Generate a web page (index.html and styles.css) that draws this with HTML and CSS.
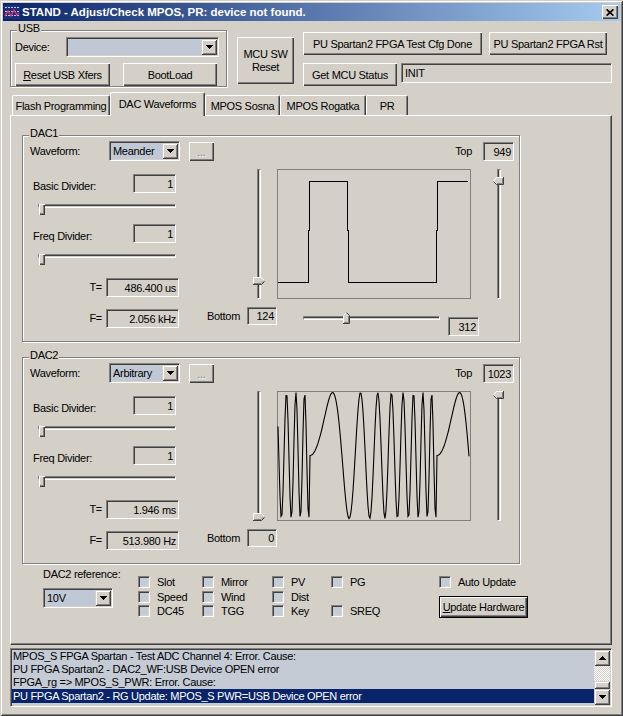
FILE: index.html
```html
<!DOCTYPE html>
<html lang="en">
<head>
<meta charset="utf-8">
<title>STAND</title>
<link rel="stylesheet" href="styles.css">
</head>
<body>
<div class="window">
  <div class="titlebar">
    <svg class="app-icon" width="16" height="16" viewBox="0 0 16 16">
      <rect x="0" y="1" width="16" height="14" fill="#1C2F78"/>
      <path d="M1 3.5H15M1 7.5H15M1 11.5H15" stroke="#B8C4E8" stroke-dasharray="2 1"/>
      <polyline points="1,12 4,7 7,12 10,6 13,11 15,9" fill="none" stroke="#E8386C" stroke-width="1.2"/>
    </svg>
    <span class="title">STAND - Adjust/Check MPOS, PR: device not found.</span>
    <span class="close-btn"><svg width="8" height="7" viewBox="0 0 8 7"><path d="M0.6 0.4L7.4 6.6M7.4 0.4L0.6 6.6" stroke="#000" stroke-width="1.7"/></svg></span>
  </div>
  <div class="client">
    <div class="top-row">
      <div class="group usb">
        <span class="group-title">USB</span>
        <div class="usb-line">
          <span class="usb-label">Device:</span>
          <div class="combo combo-device"><span class="combo-text"></span><span class="drop-btn"><svg width="7" height="4" viewBox="0 0 7 4"><path d="M0,0H7V1H6V2H5V3H4V4H3V3H2V2H1V1H0Z" fill="#000"/></svg></span></div>
        </div>
        <div class="usb-buttons">
          <button class="btn btn-reset"><u>R</u>eset USB Xfers</button>
          <button class="btn btn-boot">BootLoad</button>
        </div>
      </div>
      <button class="btn btn-mcu">MCU SW<br>Reset</button>
      <div class="fpga">
        <div class="fpga-line">
          <button class="btn btn-cfg">PU Spartan2 FPGA Test Cfg Done</button>
          <button class="btn btn-rst">PU Spartan2 FPGA Rst</button>
        </div>
        <div class="fpga-line fpga-line2">
          <button class="btn btn-status">Get MCU Status</button>
          <div class="field status-field">INIT</div>
        </div>
      </div>
    </div>

    <div class="tabs">
      <span class="tab tab-flash">Flash Programming</span>
      <span class="tab tab-dac active">DAC Waveforms</span>
      <span class="tab tab-sosna">MPOS Sosna</span>
      <span class="tab tab-rogatka">MPOS Rogatka</span>
      <span class="tab tab-pr">PR</span>
    </div>

    <div class="panel">
      <!-- DAC1 -->
      <div class="group dac">
        <span class="group-title">DAC1</span>
        <div class="dac-head">
          <span class="wave-label">Waveform:</span>
          <div class="combo combo-wave"><span class="combo-text">Meander</span><span class="drop-btn"><svg width="7" height="4" viewBox="0 0 7 4"><path d="M0,0H7V1H6V2H5V3H4V4H3V3H2V2H1V1H0Z" fill="#000"/></svg></span></div>
          <button class="btn btn-more">...</button>
          <span class="top-label">Top</span>
          <div class="field num top-field">949</div>
        </div>
        <div class="dac-body">
          <div class="params">
            <div class="param-row first"><span class="param-label">Basic Divider:</span><div class="field num div-field">1</div></div>
            <div class="hslider div-slider"><span class="groove"></span><span class="thumb-rect" style="left:1px"></span></div>
            <div class="param-row"><span class="param-label">Freq Divider:</span><div class="field num div-field">1</div></div>
            <div class="hslider div-slider"><span class="groove"></span><span class="thumb-rect" style="left:1px"></span></div>
            <div class="result-row result-t"><span class="result-label">T=</span><div class="field num result-field">486.400 us</div></div>
            <div class="result-row result-f"><span class="result-label">F=</span><div class="field num result-field">2.056 kHz</div></div>
          </div>
          <div class="level-col">
            <div class="vslider vslider-left"><span class="vgroove"></span>
              <svg class="thumb-v" style="top:108px" width="12" height="8" viewBox="0 0 12 8">
                <polygon points="0,0 8,0 12,4 8,8 0,8" fill="#D4D0C8"/>
                <polyline points="0.5,8 0.5,0.5 8.5,0.5 11,3" fill="none" stroke="#fff"/>
                <polyline points="0,7.5 8.5,7.5 11.5,4.5" fill="none" stroke="#404040"/>
                <polyline points="1,6.5 8,6.5 10.5,4" fill="none" stroke="#808080"/>
              </svg>
            </div>
            <div class="bottom-row"><span class="bottom-label">Bottom</span><div class="field num bottom-field">124</div></div>
          </div>
          <div class="graph-col">
            <svg class="graph" width="194" height="130" viewBox="0 0 194 130">
              <rect x="0.5" y="0.5" width="193" height="129" fill="none" stroke="#808080"/>
              <polyline points="1,113.5 31.5,113.5 31.5,61.5 32.5,61.5 32.5,12.5 70.5,12.5 70.5,61.5 71.5,61.5 71.5,113.5 159.5,113.5 159.5,61.5 160.5,61.5 160.5,12.5 191,12.5" fill="none" stroke="#000" shape-rendering="crispEdges"/>
            </svg>
            <div class="graph-under">
              <div class="hslider time-slider"><span class="groove"></span>
                <svg class="thumb-h" style="left:40px" width="7" height="12" viewBox="0 0 7 12">
                  <polygon points="0,3.5 3.5,0 7,3.5 7,12 0,12" fill="#D4D0C8"/>
                  <polyline points="0.5,11.5 0.5,3.5 3.5,0.5" fill="none" stroke="#fff"/>
                  <polyline points="3.5,0.5 6.5,3.5 6.5,11.5 0,11.5" fill="none" stroke="#404040"/>
                  <polyline points="5.5,4 5.5,10.5 1,10.5" fill="none" stroke="#808080"/>
                </svg>
              </div>
              <div class="field num time-field">312</div>
            </div>
          </div>
          <div class="vslider vslider-right"><span class="vgroove"></span>
            <svg class="thumb-v" style="top:8px" width="11" height="8" viewBox="0 0 11 8">
              <polygon points="0,4 4,0 11,0 11,8 4,8" fill="#D4D0C8"/>
              <polyline points="3.5,7 0.5,4 3.5,0.5 10.5,0.5" fill="none" stroke="#fff"/>
              <polyline points="0.5,4.5 3.5,7.5 10.5,7.5 10.5,0" fill="none" stroke="#404040"/>
              <polyline points="4,6.5 9.5,6.5 9.5,1" fill="none" stroke="#808080"/>
            </svg>
          </div>
        </div>
      </div>

      <!-- DAC2 -->
      <div class="group dac dac2">
        <span class="group-title">DAC2</span>
        <div class="dac-head">
          <span class="wave-label">Waveform:</span>
          <div class="combo combo-wave"><span class="combo-text">Arbitrary</span><span class="drop-btn"><svg width="7" height="4" viewBox="0 0 7 4"><path d="M0,0H7V1H6V2H5V3H4V4H3V3H2V2H1V1H0Z" fill="#000"/></svg></span></div>
          <button class="btn btn-more">...</button>
          <span class="top-label">Top</span>
          <div class="field num top-field">1023</div>
        </div>
        <div class="dac-body">
          <div class="params">
            <div class="param-row first"><span class="param-label">Basic Divider:</span><div class="field num div-field">1</div></div>
            <div class="hslider div-slider"><span class="groove"></span><span class="thumb-rect" style="left:1px"></span></div>
            <div class="param-row"><span class="param-label">Freq Divider:</span><div class="field num div-field">1</div></div>
            <div class="hslider div-slider"><span class="groove"></span><span class="thumb-rect" style="left:1px"></span></div>
            <div class="result-row result-t"><span class="result-label">T=</span><div class="field num result-field">1.946 ms</div></div>
            <div class="result-row result-f"><span class="result-label">F=</span><div class="field num result-field">513.980 Hz</div></div>
          </div>
          <div class="level-col">
            <div class="vslider vslider-left"><span class="vgroove"></span>
              <svg class="thumb-v" style="top:122px" width="12" height="8" viewBox="0 0 12 8">
                <polygon points="0,0 8,0 12,4 8,8 0,8" fill="#D4D0C8"/>
                <polyline points="0.5,8 0.5,0.5 8.5,0.5 11,3" fill="none" stroke="#fff"/>
                <polyline points="0,7.5 8.5,7.5 11.5,4.5" fill="none" stroke="#404040"/>
                <polyline points="1,6.5 8,6.5 10.5,4" fill="none" stroke="#808080"/>
              </svg>
            </div>
            <div class="bottom-row"><span class="bottom-label">Bottom</span><div class="field num bottom-field">0</div></div>
          </div>
          <div class="graph-col">
            <svg class="graph" width="194" height="130" viewBox="0 0 194 130">
              <rect x="0.5" y="0.5" width="193" height="129" fill="none" stroke="#808080"/>
              <polyline id="arb-wave" points="" fill="none" stroke="#000" stroke-width="1.1"/>
            </svg>
          </div>
          <div class="vslider vslider-right"><span class="vgroove"></span>
            <svg class="thumb-v" style="top:0px" width="11" height="8" viewBox="0 0 11 8">
              <polygon points="0,4 4,0 11,0 11,8 4,8" fill="#D4D0C8"/>
              <polyline points="3.5,7 0.5,4 3.5,0.5 10.5,0.5" fill="none" stroke="#fff"/>
              <polyline points="0.5,4.5 3.5,7.5 10.5,7.5 10.5,0" fill="none" stroke="#404040"/>
              <polyline points="4,6.5 9.5,6.5 9.5,1" fill="none" stroke="#808080"/>
            </svg>
          </div>
        </div>
      </div>

      <div class="bottom">
        <div class="ref">
          <div class="ref-label">DAC2 reference:</div>
          <div class="combo combo-ref"><span class="combo-text">10V</span><span class="drop-btn"><svg width="7" height="4" viewBox="0 0 7 4"><path d="M0,0H7V1H6V2H5V3H4V4H3V3H2V2H1V1H0Z" fill="#000"/></svg></span></div>
        </div>
        <div class="checks">
          <label class="cb"><span class="box"></span><span class="cb-label">Slot</span></label>
          <label class="cb"><span class="box"></span><span class="cb-label">Mirror</span></label>
          <label class="cb"><span class="box"></span><span class="cb-label">PV</span></label>
          <label class="cb"><span class="box"></span><span class="cb-label">PG</span></label>
          <label class="cb"><span class="box"></span><span class="cb-label">Speed</span></label>
          <label class="cb"><span class="box"></span><span class="cb-label">Wind</span></label>
          <label class="cb"><span class="box"></span><span class="cb-label">Dist</span></label>
          <span class="cb-empty"></span>
          <label class="cb"><span class="box"></span><span class="cb-label">DC45</span></label>
          <label class="cb"><span class="box"></span><span class="cb-label">TGG</span></label>
          <label class="cb"><span class="box"></span><span class="cb-label">Key</span></label>
          <label class="cb"><span class="box"></span><span class="cb-label">SREQ</span></label>
        </div>
        <div class="auto">
          <label class="cb"><span class="box"></span><span class="cb-label">Auto Update</span></label>
          <button class="btn btn-update"><u>U</u>pdate Hardware</button>
        </div>
      </div>
    </div>

    <div class="listbox">
      <div class="lines">
        <div class="line">MPOS_S FPGA Spartan - Test ADC Channel 4: Error. Cause:</div>
        <div class="line">PU FPGA Spartan2 - DAC2_WF:USB Device OPEN error</div>
        <div class="line">FPGA_rg =&gt; MPOS_S_PWR: Error. Cause:</div>
        <div class="line sel">PU FPGA Spartan2 - RG Update: MPOS_S PWR=USB Device OPEN error</div>
      </div>
      <div class="scrollbar">
        <span class="sb-btn"><svg width="7" height="4" viewBox="0 0 7 4"><path d="M3,0H4V1H5V2H6V3H7V4H0V3H1V2H2V1H3Z" fill="#000"/></svg></span>
        <span class="sb-track"><span class="sb-thumb"></span></span>
        <span class="sb-btn"><svg width="7" height="4" viewBox="0 0 7 4"><path d="M0,0H7V1H6V2H5V3H4V4H3V3H2V2H1V1H0Z" fill="#000"/></svg></span>
      </div>
    </div>
  </div>
</div>
<script src="script.js"></script>
</body>
</html>
```

FILE: styles.css
```css
* { box-sizing: border-box; }
html, body { margin: 0; padding: 0; background: #D4D0C8; }
body {
  font-family: "Liberation Sans", Arial, sans-serif;
  font-size: 11px;
  letter-spacing: -0.3px;
  color: #000;
}
button { font: inherit; letter-spacing: inherit; color: #000; margin: 0; }

.window {
  width: 623px;
  height: 716px;
  padding: 3px;
  background: #D4D0C8;
  box-shadow: inset 1px 1px 0 #D4D0C8, inset -1px -1px 0 #404040, inset 2px 2px 0 #fff, inset -2px -2px 0 #808080;
  display: flex;
  flex-direction: column;
}

/* title bar */
.titlebar {
  flex: none;
  height: 18px;
  display: flex;
  align-items: center;
  background: linear-gradient(to right, #0A246A, #A6CAF0);
  color: #fff;
}
.app-icon { flex: none; display: block; margin-left: 1px; }
.title {
  margin-left: 2px;
  font-weight: bold;
  font-size: 11.5px;
  letter-spacing: 0;
  line-height: 14px;
  white-space: nowrap;
}
.close-btn {
  margin-left: auto;
  margin-right: 2px;
  width: 16px;
  height: 14px;
  background: #D4D0C8;
  display: flex;
  align-items: center;
  justify-content: center;
  box-shadow: inset 1px 1px 0 #fff, inset -1px -1px 0 #404040, inset -2px -2px 0 #808080;
}
.close-btn svg { display: block; }

/* client */
.client { flex: 1; display: flex; flex-direction: column; }

.top-row { flex: none; display: flex; align-items: flex-start; height: 66px; }

.group {
  position: relative;
  border: 1px solid #808080;
  box-shadow: 1px 1px 0 #fff, inset 1px 1px 0 #fff;
}
.group-title {
  position: absolute;
  top: -9px;
  left: 6px;
  padding: 0 1px;
  background: #D4D0C8;
  line-height: 13px;
  white-space: nowrap;
}

.usb { width: 217px; height: 57px; margin: 9px 0 0 7px; padding: 6px 0 0 4px; }
.usb-line { display: flex; height: 20px; }
.usb-label { width: 51px; line-height: 20px; }
.combo-device { width: 153px; }
.usb-buttons { display: flex; margin-top: 6px; }
.btn-reset { width: 95px; height: 23px; }
.btn-boot { width: 94px; height: 23px; margin-left: 13px; }
.btn-mcu { width: 57px; height: 47px; margin: 16px 0 0 10px; line-height: 13px; }

.fpga { margin: 11px 0 0 9px; }
.fpga-line { display: flex; align-items: flex-start; }
.fpga-line2 { margin-top: 8px; }
.btn-cfg { width: 179px; height: 23px; }
.btn-rst { width: 118px; height: 23px; margin-left: 7px; }
.btn-status { width: 94px; height: 23px; }
.status-field { width: 211px; height: 20px; margin-left: 4px; padding-left: 3px; }

/* common controls */
.btn {
  background: #D4D0C8;
  border: none;
  padding: 0;
  text-align: center;
  white-space: nowrap;
  box-shadow: inset 1px 1px 0 #fff, inset -1px -1px 0 #404040, inset -2px -2px 0 #808080;
}

.field {
  display: flex;
  align-items: center;
  background: #D4D0C8;
  border: 1px solid;
  border-color: #808080 #fff #fff #808080;
  box-shadow: inset 1px 1px 0 #404040;
  white-space: nowrap;
  overflow: hidden;
}
.num { justify-content: flex-end; padding-right: 2px; }

.combo {
  display: flex;
  height: 20px;
  padding: 1px;
  background: #BFC8D4;
  border: 1px solid;
  border-color: #808080 #fff #fff #808080;
  box-shadow: inset 1px 1px 0 #404040, inset -1px -1px 0 #D4D0C8;
}
.combo-text { flex: 1; padding-left: 2px; line-height: 16px; white-space: nowrap; overflow: hidden; }
.drop-btn, .sb-btn {
  flex: none;
  width: 16px;
  height: 16px;
  background: #D4D0C8;
  display: flex;
  align-items: center;
  justify-content: center;
  box-shadow: inset 1px 1px 0 #D4D0C8, inset -1px -1px 0 #404040, inset 2px 2px 0 #fff, inset -2px -2px 0 #808080;
}
.drop-btn svg, .sb-btn svg { display: block; }

/* tabs */
.tabs { flex: none; display: flex; align-items: flex-end; height: 23px; margin: 5px 0 0 9px; }
.tab {
  height: 20px;
  padding-top: 4px;
  line-height: 13px;
  text-align: center;
  white-space: nowrap;
  background: #D4D0C8;
  border-top: 1px solid #fff;
  border-left: 1px solid #fff;
  border-right: 1px solid #404040;
  box-shadow: inset -1px 0 0 #808080;
  border-radius: 2px 2px 0 0;
}
.tab-flash { width: 98px; }
.tab-dac { width: 95px; }
.tab-sosna { width: 75px; }
.tab-rogatka { width: 86px; }
.tab-pr { width: 42px; }
.tab.active {
  height: 24px;
  padding-top: 5px;
  margin-bottom: -1px;
  position: relative;
  z-index: 1;
}

.panel {
  flex: none;
  width: 602px;
  height: 530px;
  margin-left: 7px;
  border-top: 1px solid #fff;
  border-left: 1px solid #fff;
  border-right: 1px solid #404040;
  border-bottom: 1px solid #404040;
  box-shadow: inset -1px -1px 0 #808080;
  padding: 19px 0 0 11px;
}

/* DAC groups */
.dac { width: 498px; height: 207px; padding: 5px 0 0 7px; }
.dac2 { margin-top: 15px; }
.dac-head { display: flex; align-items: flex-start; height: 20px; }
.wave-label { width: 79px; line-height: 20px; }
.combo-wave { width: 71px; }
.btn-more {
  width: 25px;
  height: 19px;
  margin: 1px 0 0 9px;
  color: #808080;
  text-shadow: 1px 1px 0 #fff;
}
.top-label { margin-left: auto; margin-right: 11px; line-height: 20px; }
.top-field { width: 31px; height: 19px; margin: 1px 5px 0 0; }

.dac-body { display: flex; align-items: flex-start; margin-top: 8px; }
.params { width: 177px; }
.param-row { display: flex; align-items: flex-start; height: 19px; margin-top: 9px; }
.param-row.first { margin-top: 5px; }
.param-label { width: 103px; padding-left: 3px; margin-top: 6px; line-height: 13px; white-space: nowrap; }
.div-field { width: 43px; height: 19px; }

.hslider { position: relative; }
.div-slider { width: 138px; height: 11px; margin: 11px 0 0 8px; }
.groove {
  display: block;
  height: 4px;
  margin-top: 3px;
  border: 1px solid;
  border-color: #808080 #fff #fff #808080;
  box-shadow: inset 0 1px 0 #404040;
}
.thumb-rect {
  position: absolute;
  top: 0;
  width: 6px;
  height: 11px;
  background: #D4D0C8;
  box-shadow: inset 1px 1px 0 #fff, inset -1px -1px 0 #404040, inset -2px -2px 0 #808080;
}

.result-row { display: flex; height: 19px; }
.result-t { margin-top: 13px; }
.result-f { margin-top: 12px; }
.result-label { width: 76px; padding-right: 4px; text-align: right; line-height: 19px; }
.result-field { width: 73px; height: 19px; }

.level-col { width: 70px; }
.vslider { position: relative; height: 130px; flex: none; }
.vslider-left { width: 12px; margin-left: 46px; }
.vgroove {
  display: block;
  width: 4px;
  height: 100%;
  margin-left: 4px;
  border: 1px solid;
  border-color: #808080 #fff #fff #808080;
  box-shadow: inset 1px 0 0 #404040;
}
.thumb-v { position: absolute; left: 0; display: block; }
.thumb-h { position: absolute; top: 0; display: block; }

.bottom-row { display: flex; height: 18px; margin-top: 8px; }
.bottom-label { line-height: 18px; }
.bottom-field { width: 30px; height: 18px; margin-left: auto; }

.graph-col { width: 202px; }
.graph { display: block; }
.graph-under { display: flex; align-items: flex-start; margin-top: 13px; }
.time-slider { width: 137px; height: 12px; margin-left: 26px; }
.time-slider .groove { margin-top: 4px; }
.time-field { width: 31px; height: 19px; margin: 5px 0 0 8px; }
.vslider-right { width: 11px; margin-left: 14px; }

/* bottom of tab page */
.bottom { display: flex; align-items: flex-start; margin-top: 4px; padding-left: 21px; }
.ref { width: 95px; }
.ref-label { line-height: 13px; white-space: nowrap; }
.combo-ref { width: 70px; margin-top: 7px; }
.checks {
  display: grid;
  grid-template-columns: 64px 70px 59px 108px;
  grid-template-rows: 15px 14px 14px;
  margin-top: 8px;
}
.cb { display: flex; align-items: flex-start; height: 12px; }
.box {
  flex: none;
  width: 12px;
  height: 12px;
  background: #C4CCD6;
  border: 1px solid;
  border-color: #808080 #fff #fff #808080;
  box-shadow: inset 1px 1px 0 #404040, inset -1px -1px 0 #D4D0C8;
}
.cb-label { margin-left: 7px; line-height: 12px; white-space: nowrap; }
.auto { margin-top: 8px; }
.btn-update {
  display: block;
  width: 89px;
  height: 22px;
  margin-top: 8px;
  border: 1px solid #000;
}

/* log list */
.listbox {
  flex: none;
  display: flex;
  width: 602px;
  height: 59px;
  margin: 3px 0 0 7px;
  padding: 1px;
  background: #C4CBD5;
  border: 1px solid;
  border-color: #808080 #fff #fff #808080;
  box-shadow: inset 1px 1px 0 #404040, inset -1px -1px 0 #D4D0C8;
}
.lines { flex: 1; overflow: hidden; }
.line { height: 13px; line-height: 13px; padding-left: 1px; white-space: nowrap; }
.line.sel { height: 14px; line-height: 14px; background: #0A246A; color: #fff; }
.scrollbar { flex: none; width: 16px; display: flex; flex-direction: column; }
.sb-track {
  flex: 1;
  display: flex;
  flex-direction: column;
  justify-content: flex-end;
  background-image: repeating-conic-gradient(#fff 0% 25%, #D4D0C8 0% 50%);
  background-size: 2px 2px;
}
.sb-thumb {
  height: 8px;
  background: #D4D0C8;
  box-shadow: inset 1px 1px 0 #D4D0C8, inset -1px -1px 0 #404040, inset 2px 2px 0 #fff, inset -2px -2px 0 #808080;
}
```

FILE: script.js
```js
(function () {
  var pl = document.getElementById('arb-wave');
  if (!pl) return;
  var pts = [];
  var L = 127;
  for (var x = 1; x <= 192; x++) {
    var t;
    if (x < 33) t = x + 94;
    else if (x < 33 + L) t = x - 33;
    else t = x - 33 - L;
    var ph = Math.PI * t * t / 1020;
    var y = 64.5 - 63 * Math.sin(ph);
    pts.push(x + ',' + y.toFixed(1));
  }
  pl.setAttribute('points', pts.join(' '));
})();
```
